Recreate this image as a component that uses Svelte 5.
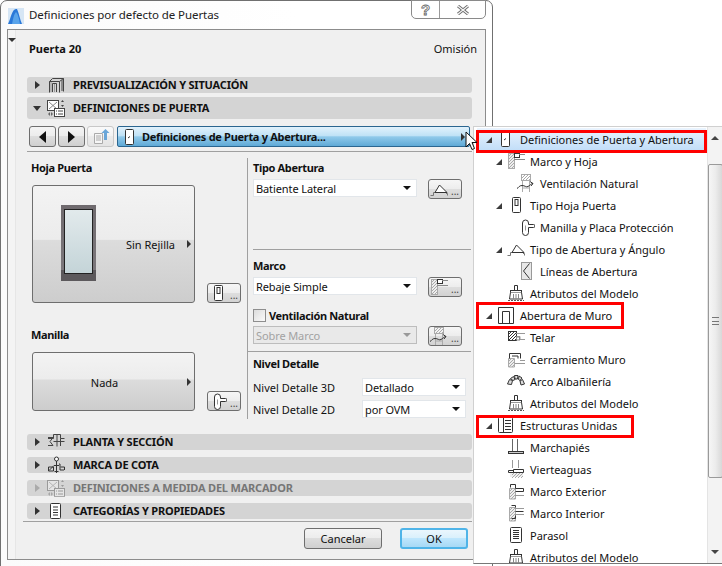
<script>
  const hatch = (x, y, w, h, c = '#aaa') => {
    let d = '';
    for (let i = 2; i < w + h; i += 3) {
      const x1 = x + Math.max(0, i - h), y1 = y + Math.min(i, h);
      const x2 = x + Math.min(i, w), y2 = y + Math.max(0, i - w);
      d += `M${x1} ${y1}L${x2} ${y2}`;
    }
    return `<path d="${d}" stroke="${c}" fill="none"/>`;
  };

  // tree + section icons, all in an 18x18 box
  const icons = {
    door: `<rect x="4.5" y="1.5" width="8" height="15" rx="1" fill="#fff" stroke="#333"/><path d="M7 10l2-1.5" stroke="#333"/>`,
    leaf: `<rect x="5.5" y="1.5" width="8" height="15" rx="1" fill="#fff" stroke="#333"/><rect x="8" y="3.5" width="3" height="6" fill="#fff" stroke="#333"/>`,
    frame: `<rect x="1.5" y="1.5" width="6" height="15" fill="#eee" stroke="#aaa"/>${hatch(2, 2, 5, 14)}<rect x="7.5" y="1.5" width="5" height="4" fill="#fff" stroke="#333"/><path d="M12 2.5h6M7 7.5h11" stroke="#888" fill="none"/>`,
    vent: `${hatch(4, 0, 10, 7)}<rect x="4.5" y="0.5" width="9" height="6" fill="none" stroke="#aaa"/><path d="M5.5 7v11M12.5 7v11M5 14h8" stroke="#aaa" fill="none"/><path d="M0 14.5c2-1 2-3 5-3s4 2 6 1 3-3 5-3M13 7.5l3 2-2 2.5" stroke="#333" fill="none"/>`,
    handle: `<path d="M5.5 5a3 3 0 0 1 6 0v1.5h5a1.5 1.5 0 0 1 0 3h-5v5a3 3 0 0 1-6 0z" fill="#fff" stroke="#333"/><path d="M8.5 7.5v5" stroke="#999"/>`,
    swing: `<path d="M0.5 15.5h3v-3h3" stroke="#777" fill="none"/><path d="M5 12.5h12L9.5 5z" fill="#fff" stroke="#333"/><path d="M16 13.5h1.5v2" stroke="#777" fill="none"/>`,
    lines: `<rect x="4.5" y="0.5" width="10" height="17" fill="#e8e8e8" stroke="#999"/><path d="M12.5 1.5L6.5 9l6 7.5" stroke="#333" fill="none"/>`,
    brush: `<path d="M7.5 6V1.5h3V6" fill="#fff" stroke="#333"/><rect x="3.5" y="6.5" width="11" height="2" fill="#fff" stroke="#333"/><path d="M3.5 8.5l-1 6.5h13l-1-6.5" fill="#fff" stroke="#333"/><path d="M6.5 10v5M9 10v5M11.5 10v5" stroke="#888"/><path d="M1 16.5h16" stroke="#555" stroke-dasharray="2 1"/>`,
    opening: `<path d="M1.5 17.5V1.5h15v16zM5.5 17.5V5.5h7v12" fill="#fff" stroke="#333"/>`,
    units: `<rect x="1.5" y="1.5" width="14" height="15" rx="1" fill="#fff" stroke="#333"/><path d="M6.5 2v14M8 4.5h6M8 7.5h6M8 10.5h6M8 13.5h6" stroke="#333"/>`,
    reveal: `<rect x="1.5" y="3.5" width="8" height="9" fill="#fff" stroke="#333"/>${hatch(2, 4, 7, 8, '#333')}<path d="M9 8.5h4v3h5M9 5.5h9" stroke="#999" fill="none"/><rect x="9.5" y="9" width="3" height="3" fill="#fff" stroke="#888"/>`,
    closure: `<path d="M1.5 17V8.5h6V17z" fill="#eee" stroke="#aaa"/>${hatch(2, 9, 5, 8)}<path d="M2.5 3.5h11v5M2.5 3.5v5M5 6h6v2.5" stroke="#333" fill="none"/><path d="M13 10.5h5M8 13.5h10" stroke="#999"/>`,
    arch: `<path d="M0.5 12l2-4.5 3 1-1 4zM3.5 6.5l3-2 1.5 3-2 1zM7.5 3.5h3.5l-.5 3.5h-2.5zM12 4l3 2-2 2.5-1.5-1zM15.5 7.5l2 4.5-3.5 1-1-4z" fill="#ddd" stroke="#333"/>`,
    sill: `<path d="M5.5 1v13M10.5 1v13" stroke="#666"/><rect x="1.5" y="13.5" width="15" height="2" fill="#ccc" stroke="#333"/>`,
    sillb: `<path d="M5.5 0v8M11.5 0v8" stroke="#999"/><path d="M1.5 10.5h5v2h-5zM6.5 9.5h10v3h-10z" fill="#fff" stroke="#333"/><path d="M3 13h13v4H3z" fill="#eee" stroke="none"/>${hatch(5, 13, 11, 5)}`,
    outer: `<path d="M2.5 17V6.5h6V17z" fill="#eee" stroke="#aaa"/>${hatch(3, 7, 5, 10)}<path d="M3.5 5.5V2.5h5v4M8.5 6.5h8v3h-8" fill="none" stroke="#333"/><path d="M8 13.5h9" stroke="#999"/>`,
    inner: `<path d="M2.5 17V3.5h6V17z" fill="#eee" stroke="#aaa"/>${hatch(3, 4, 5, 13)}<path d="M8.5 3.5v-2h-4M8.5 7.5h8M8.5 11.5v3h-4" fill="none" stroke="#333"/><path d="M8 4.5h9M8 10.5h9" stroke="#999"/>`,
    parasol: `<rect x="3.5" y="1.5" width="11" height="15" rx="1" fill="#fff" stroke="#333"/><path d="M6 4.500h6M6 6.500h6M6 8.500h6M6 10.500h6M6 12.500h6" stroke="#333"/>`,
    preview: `<path d="M2.500 16.500V5.500l3-3h11v13M2.500 5.500h10v11M5.500 16V7.500h4V16M12.500 5.500l4-3M15 4v11" fill="none" stroke="#444"/><path d="M7.500 8v8M4 6v10" stroke="#999"/>`,
    defs: `<rect x="0.5" y="1.5" width="11" height="10" fill="#fff" stroke="#444"/><path d="M2 3l8 7M10 3l-8 7" stroke="#888"/><path d="M14 3h3l-1.500-2zM14 6h3l-1.500 2z" fill="#444"/><rect x="7.500" y="9.500" width="10" height="8" fill="#fff" stroke="#444"/><path d="M11 12h5M11 15h5M9 12h1M9 15h1" stroke="#444"/><path d="M1 15l2-2v4zM6 15l-2-2v4z" fill="#666"/>`,
    plan: `<path d="M1 4.500h5l-3 4 3 4H1" fill="none" stroke="#444"/><path d="M6.500 1.500h7v4h4M6.500 1.500v4H1M10 1.500v12M13.500 5.500V13M6.500 8.500h11" fill="none" stroke="#444"/>`,
    mark: `<circle cx="9.500" cy="3" r="2" fill="#fff" stroke="#333"/><path d="M9.500 5v12M7.500 15.500h4M2 14.500l5-5h5M12 8h1v6h4" fill="none" stroke="#333"/><path d="M1.500 11h5v4h-5zM13.500 11h4v3" fill="none" stroke="#333"/>`,
    list: `<rect x="3.500" y="1.500" width="10" height="15" rx="1" fill="#fff" stroke="#333"/><path d="M6 5h5M6 8h5M6 10.500h5M6 13h5" stroke="#333"/>`
  };

  const tree = [
    { label: 'Definiciones de Puerta y Abertura', icon: 'door', depth: 0, open: true, box: { w: 231, top: 2, h: 23 }, active: true },
    { label: 'Marco y Hoja', icon: 'frame', depth: 1, open: true },
    { label: 'Ventilación Natural', icon: 'vent', depth: 2 },
    { label: 'Tipo Hoja Puerta', icon: 'leaf', depth: 1, open: true },
    { label: 'Manilla y Placa Protección', icon: 'handle', depth: 2 },
    { label: 'Tipo de Abertura y Ángulo', icon: 'swing', depth: 1, open: true },
    { label: 'Líneas de Abertura', icon: 'lines', depth: 2 },
    { label: 'Atributos del Modelo', icon: 'brush', depth: 1 },
    { label: 'Abertura de Muro', icon: 'opening', depth: 0, open: true, box: { w: 148, top: -2, h: 27 } },
    { label: 'Telar', icon: 'reveal', depth: 1 },
    { label: 'Cerramiento Muro', icon: 'closure', depth: 1 },
    { label: 'Arco Albañilería', icon: 'arch', depth: 1 },
    { label: 'Atributos del Modelo', icon: 'brush', depth: 1 },
    { label: 'Estructuras Unidas', icon: 'units', depth: 0, open: true, box: { w: 158, top: 1, h: 23 } },
    { label: 'Marchapiés', icon: 'sill', depth: 1 },
    { label: 'Vierteaguas', icon: 'sillb', depth: 1 },
    { label: 'Marco Exterior', icon: 'outer', depth: 1 },
    { label: 'Marco Interior', icon: 'inner', depth: 1 },
    { label: 'Parasol', icon: 'parasol', depth: 1 },
    { label: 'Atributos del Modelo', icon: 'brush', depth: 1 }
  ];
</script>

{#snippet section(label, icon, open = false, off = false)}
  <div class="section" class:open class:off>
    <span class="twisty"></span>
    <svg class="sec-icon" viewBox="0 0 18 18" width="18" height="18">{@html icons[icon]}</svg>
    <span class="sec-text">{label}</span>
  </div>
{/snippet}

{#snippet pick(text, off = false)}
  <div class="select" class:off>
    <span>{text}</span>
    <i class="caret"></i>
  </div>
{/snippet}

{#snippet tool(icon)}
  <div class="tool">
    <svg viewBox="0 0 18 18" width="18" height="18">{@html icons[icon]}</svg>
    <em>...</em>
  </div>
{/snippet}

<div class="stage">
  <div class="dialog">
    <header class="titlebar">
      <svg class="logo" viewBox="0 0 16 16" width="16" height="16">
        <rect width="16" height="16" fill="#d6e6f5" />
        <path d="M0 16C3 10 4 1 8 1h1c2 4 3 11 5 15z" fill="#2a78d8" />
        <path d="M4 16C5 11 6 6 8 4c2 2 3 7 4 12z" fill="#5aa4ea" />
      </svg>
      <span class="title">Definiciones por defecto de Puertas</span>
      <div class="caption">
        <span class="help">?</span>
        <span class="close">
          <svg viewBox="0 0 12 10" width="12" height="10">
            <path d="M1 1l10 8M11 1L1 9" stroke="#666" stroke-width="3" />
            <path d="M1 1l10 8M11 1L1 9" stroke="#f4f4f4" stroke-width="1.400" />
          </svg>
        </span>
      </div>
    </header>

    <div class="panel">
      <div class="gutter"><i class="gutter-caret"></i></div>
      <div class="body">
        <div class="head">
          <b>Puerta 20</b>
          <span>Omisión</span>
        </div>

        {@render section('PREVISUALIZACIÓN Y SITUACIÓN', 'preview')}
        {@render section('DEFINICIONES DE PUERTA', 'defs', true)}

        <div class="toolbar">
          <button class="nav"><i class="arrow back"></i></button>
          <button class="nav"><i class="arrow"></i></button>
          <button class="nav faint">
            <svg viewBox="0 0 18 18" width="18" height="18">
              <path d="M2.500 5.500h8v10h-8z" fill="#f6f6f6" stroke="#aaa" />
              <path d="M4 8h5M4 10h5M4 12h5" stroke="#aaa" />
              <path d="M12 12V5H9.500L13.500 1l4 4H15v7z" fill="#6aa6d8" />
            </svg>
          </button>
          <button class="panel-menu">
            <svg viewBox="0 0 18 18" width="18" height="18">{@html icons.door}</svg>
            <b>Definiciones de Puerta y Abertura...</b>
            <i class="arrow small"></i>
          </button>
        </div>

        <div class="columns">
          <div class="left">
            <h4>Hoja Puerta</h4>
            <div class="chooser-row">
              <div class="chooser tall">
                <div class="door-pic"><div class="glass"></div></div>
                <span class="chooser-text">Sin Rejilla</span>
                <i class="arrow small"></i>
              </div>
              {@render tool('leaf')}
            </div>
            <h4 class="second">Manilla</h4>
            <div class="chooser-row">
              <div class="chooser short">
                <span class="chooser-mid">Nada</span>
                <i class="arrow small"></i>
              </div>
              {@render tool('handle')}
            </div>
          </div>

          <div class="right">
            <div class="group g1">
              <h4>Tipo Abertura</h4>
              <div class="pick-row">
                {@render pick('Batiente Lateral')}
                {@render tool('swing')}
              </div>
            </div>
            <div class="group g2">
              <h4>Marco</h4>
              <div class="pick-row">
                {@render pick('Rebaje Simple')}
                {@render tool('frame')}
              </div>
              <label class="check"><i></i><b>Ventilación Natural</b></label>
              <div class="pick-row">
                {@render pick('Sobre Marco', true)}
                {@render tool('vent')}
              </div>
            </div>
            <div class="group g3">
              <h4>Nivel Detalle</h4>
              <div class="detail">
                <span>Nivel Detalle 3D</span>
                {@render pick('Detallado')}
                <span>Nivel Detalle 2D</span>
                {@render pick('por OVM')}
              </div>
            </div>
          </div>
        </div>

        <div class="stack">
          {@render section('PLANTA Y SECCIÓN', 'plan')}
          {@render section('MARCA DE COTA', 'mark')}
          {@render section('DEFINICIONES A MEDIDA DEL MARCADOR', 'defs', false, true)}
          {@render section('CATEGORÍAS Y PROPIEDADES', 'list')}
        </div>

        <footer class="actions">
          <button class="btn">Cancelar</button>
          <button class="btn ok">OK</button>
        </footer>
      </div>
    </div>
  </div>

  <aside class="popup">
    <ul class="tree">
      {#each tree as row}
        <li class="row" class:active={row.active} style="padding-left: {11 + row.depth * 10}px">
          <span class="twist">
            {#if row.open}<svg viewBox="0 0 6 6" width="6" height="6"><path d="M6 0v6H0z" fill="#3c3c3c" /></svg>{/if}
          </span>
          <svg viewBox="0 0 18 18" width="18" height="18">{@html icons[row.icon]}</svg>
          <span class="row-text">{row.label}</span>
          {#if row.box}<span class="callout" style="width: {row.box.w}px; top: {row.box.top}px; height: {row.box.h}px"></span>{/if}
        </li>
      {/each}
    </ul>
    <div class="scrollbar">
      <i class="sb-up"></i>
      <div class="thumb"><i></i></div>
      <i class="sb-down"></i>
    </div>
  </aside>

  <svg class="cursor" viewBox="0 0 13 20" width="13" height="20">
    <path d="M1 1v15l3.500-3.500 2.500 6 2.500-1-2.500-6h5z" fill="#fff" stroke="#111" />
  </svg>
</div>

<style>
  :global(body) {
    background: #fff;
  }

  .stage {
    position: relative;
    width: 722px;
    height: 566px;
    overflow: hidden;
    background: #fff;
    font-family: "Noto Sans", "Liberation Sans", sans-serif;
    font-size: 11px;
    color: #111;
  }

  h4 {
    margin: 0;
    font-size: 11px;
    line-height: 16px;
    font-weight: 700;
    letter-spacing: -0.35px;
  }

  i {
    display: block;
  }

  button {
    font: inherit;
    color: inherit;
    padding: 0;
  }

  .dialog {
    position: absolute;
    left: 0;
    top: 0;
    width: 493px;
    height: 570px;
    box-sizing: border-box;
    border: 1px solid #707070;
    border-radius: 7px 7px 0 0;
    background: linear-gradient(90deg, #fbfbfb, #fff 60%);
  }

  .titlebar {
    position: relative;
    height: 28px;
    display: flex;
    align-items: center;
    padding-left: 7px;
    gap: 5px;
  }

  .logo {
    flex: none;
    margin-top: 1px;
  }

  .title {
    font-size: 11.5px;
    letter-spacing: -0.08px;
    color: #222;
    margin-top: -1px;
  }

  .caption {
    position: absolute;
    right: 6px;
    top: -1px;
    width: 75px;
    height: 19px;
    box-sizing: border-box;
    display: flex;
    border: 1px solid #8a8a8a;
    border-radius: 0 0 5px 5px;
    background: #fff;
  }

  .help {
    width: 27px;
    border-right: 1px solid #9a9a9a;
    text-align: center;
    font: 700 15px/17px "Liberation Sans", sans-serif;
    color: #f4f4f4;
    -webkit-text-stroke: 0.8px #666;
  }

  .close {
    flex: 1;
    display: flex;
    align-items: center;
    justify-content: center;
  }

  .panel {
    margin-left: 6px;
    width: 479px;
    height: 531px;
    box-sizing: border-box;
    display: flex;
    border: 1px solid #8c8c8c;
    background: #f0f0f0;
  }

  .gutter {
    flex: none;
    width: 7px;
    background: #f4f4f4;
    border-right: 1px solid #e6e6e6;
    position: relative;
  }

  .gutter-caret {
    margin: 8px 0 0 0;
    width: 0;
    border: 4px solid transparent;
    border-top: 4px solid #333;
    border-bottom: 0;
  }

  .body {
    flex: 1;
    min-width: 0;
    display: flex;
    flex-direction: column;
    padding: 0 13px 0 11px;
  }

  .head {
    height: 47px;
    padding: 11px 0 0 2px;
    margin-right: -5px;
    box-sizing: border-box;
    display: flex;
    justify-content: space-between;
    line-height: 16px;
    flex: none;
  }

  .section {
    flex: none;
    height: 16px;
    box-sizing: border-box;
    display: flex;
    align-items: center;
    padding-left: 6px;
    border-radius: 3px;
    background: #d4d4d4;
    font-size: 11px;
    font-weight: 700;
    color: #111;
  }

  .sec-text {
    letter-spacing: -0.2px;
    margin-top: -2px;
  }

  .section + .section {
    margin-top: 4px;
  }

  .section.open {
    height: 22px;
  }

  .section.off {
    color: #767676;
  }

  .section.off .sec-icon {
    opacity: 0.4;
  }

  .twisty {
    flex: none;
    width: 0;
    height: 0;
    margin: 0 7px 0 2px;
    border-left: 5px solid #333;
    border-top: 4px solid transparent;
    border-bottom: 4px solid transparent;
  }

  .section.open .twisty {
    margin: 0 6px 0 0;
    border-top: 5px solid #333;
    border-left: 4px solid transparent;
    border-right: 4px solid transparent;
    border-bottom: 0;
  }

  .section.off .twisty {
    border-left-color: #aaa;
  }

  .sec-icon {
    flex: none;
    margin: 0 8px 0 0;
  }

  .toolbar {
    flex: none;
    height: 21px;
    margin-top: 7px;
    padding: 0 2px 4px 2px;
    display: flex;
    gap: 2px;
    border-bottom: 1px solid #a0a0a0;
  }

  .nav {
    width: 27px;
    height: 21px;
    display: flex;
    align-items: center;
    justify-content: center;
    border: 1px solid #6e6e6e;
    border-radius: 3px;
    background: linear-gradient(#f4f4f4, #ececec 48%, #dddddd 50%, #cfcfcf);
  }

  .nav.faint {
    border-color: #c8c8c8;
    background: linear-gradient(#fafafa, #f2f2f2 48%, #ebebeb 50%, #e4e4e4);
  }

  .arrow {
    width: 0;
    height: 0;
    border-left: 7px solid #111;
    border-top: 6px solid transparent;
    border-bottom: 6px solid transparent;
  }

  .arrow.back {
    border-left: 0;
    border-right: 7px solid #111;
  }

  .arrow.small {
    border-left: 4px solid #333;
    border-top-width: 4px;
    border-bottom-width: 4px;
  }

  .panel-menu {
    flex: 1;
    height: 21px;
    margin-left: 1px;
    display: flex;
    align-items: center;
    padding: 0 4px 0 3px;
    border: 1px solid #2b6690;
    border-radius: 2px;
    background: linear-gradient(#e2f2fc, #c0e2f6 45%, #90c9ea 52%, #5fa9d6);
    text-align: left;
  }

  .panel-menu b {
    flex: 1;
    margin-left: 3px;
    letter-spacing: -0.3px;
  }

  .columns {
    flex: none;
    height: 279px;
    display: flex;
  }

  .left {
    width: 220px;
    flex: none;
    padding: 8px 0 0 4px;
    box-sizing: border-box;
  }

  .left .second {
    margin-top: 24px;
  }

  .chooser-row {
    margin: 9px 0 0 1px;
    display: flex;
    align-items: flex-end;
    gap: 12px;
  }

  .chooser {
    flex: none;
    width: 163px;
    box-sizing: border-box;
    position: relative;
    display: flex;
    align-items: center;
    justify-content: flex-end;
    padding-right: 3px;
    border: 1px solid #6e6e6e;
    border-radius: 3px;
    background: linear-gradient(#f3f3f3, #ececec 46%, #dcdcdc 47%, #cdcdcd);
  }

  .tall {
    height: 118px;
  }

  .short {
    height: 59px;
  }

  .chooser-text {
    margin-right: 12px;
    margin-top: 1px;
  }

  .chooser-mid {
    position: absolute;
    left: 0;
    right: 18px;
    text-align: center;
    margin-top: 1px;
  }

  .door-pic {
    position: absolute;
    left: 28px;
    top: 19px;
    width: 35px;
    height: 76px;
    box-sizing: border-box;
    padding: 4px 3px 7px;
    background: linear-gradient(#6f6a6e, #7b777b 85%, #5c595c 85%);
  }

  .glass {
    height: 100%;
    box-sizing: border-box;
    border: 1px solid #222;
    background: linear-gradient(#e2eaec, #c4d4d8);
  }

  .tool {
    flex: none;
    position: relative;
    width: 34px;
    height: 20px;
    box-sizing: border-box;
    border: 1px solid #6e6e6e;
    border-radius: 3px;
    padding-left: 1px;
    background: linear-gradient(#f6f6f6, #ededed 48%, #dedede 50%, #d2d2d2);
    overflow: hidden;
  }

  .tool svg {
    display: block;
  }

  .tool em {
    position: absolute;
    right: 2px;
    bottom: 0;
    font-style: normal;
    line-height: 13px;
    font-size: 10px;
    color: #444;
  }

  .right {
    flex: 1;
    margin-top: 6px;
    height: 261px;
    border-left: 1px solid #a0a0a0;
  }

  .group {
    box-sizing: border-box;
    border-bottom: 1px solid #a0a0a0;
    padding: 2px 0 0 5px;
    margin-right: 1px;
  }

  .g1 {
    height: 92px;
    margin-left: 5px;
    padding-left: 0;
  }

  .g2 {
    height: 102px;
  }

  .g3 {
    border-bottom: 0;
    padding-top: 4px;
  }

  .pick-row {
    margin-top: 3px;
    display: flex;
    gap: 11px;
    height: 21px;
    margin-right: 9px;
  }

  .g2 h4 {
    margin-top: 6px;
  }

  .select {
    flex: 1;
    height: 18px;
    box-sizing: border-box;
    display: flex;
    align-items: center;
    justify-content: space-between;
    padding: 0 5px 0 2px;
    background: #fff;
    border: 1px solid #e2e6ea;
    letter-spacing: -0.1px;
  }

  .select.off {
    background: #e9e9e9;
    border-color: #bdbdbd;
    color: #a2a2a2;
  }

  .select.off .caret {
    border-top-color: #999;
  }

  .caret {
    width: 0;
    height: 0;
    border-top: 4px solid #111;
    border-left: 4px solid transparent;
    border-right: 4px solid transparent;
  }

  .check {
    margin-top: 10px;
    height: 14px;
    display: flex;
    align-items: center;
    gap: 3px;
    letter-spacing: -0.35px;
  }

  .check + .pick-row {
    margin-top: 4px;
  }

  .check i {
    width: 13px;
    height: 13px;
    box-sizing: border-box;
    border: 1px solid #8e8e8e;
    background: linear-gradient(135deg, #dcdcdc, #fafafa);
  }

  .detail {
    margin-top: 6px;
    display: grid;
    grid-template-columns: 109px 104px;
    row-gap: 4px;
    align-items: center;
  }

  .stack {
    flex: none;
    margin-top: 3px;
    padding-bottom: 2px;
    margin-left: -4px;
    padding-left: 4px;
    border-bottom: 1px solid #a0a0a0;
    display: flex;
    flex-direction: column;
    gap: 7px;
  }

  .stack .section + .section {
    margin-top: 0;
  }

  .actions {
    flex: none;
    margin-top: 6px;
    display: flex;
    justify-content: flex-end;
    gap: 18px;
    margin-right: 4px;
  }

  .btn {
    width: 78px;
    height: 21px;
    border: 1px solid #6e6e6e;
    border-radius: 3px;
    background: linear-gradient(#f4f4f4, #ececec 48%, #dddddd 50%, #cfcfcf);
  }

  .btn.ok {
    width: 68px;
    border: 2px solid #4fb4e8;
    background: linear-gradient(#eaf6fd, #d9f0fc 48%, #bee6fd 50%, #a7d9f5);
  }

  .popup {
    position: absolute;
    left: 473px;
    top: 126px;
    width: 249px;
    height: 438px;
    box-sizing: border-box;
    display: flex;
    background: #fff;
    border: 1px solid #d0d0d0;
    border-right: 0;
    border-bottom-color: #777;
    overflow: hidden;
  }

  .tree {
    flex: 1;
    min-width: 0;
    margin: 0;
    padding: 1px 0 0;
    list-style: none;
  }

  .row {
    position: relative;
    height: 22px;
    box-sizing: border-box;
    display: flex;
    align-items: center;
    white-space: nowrap;
  }

  .row.active {
    margin: 0 1px 0 3px;
    background: linear-gradient(#eaf4fe, #c2def8);
  }

  .row.active > .twist {
    margin-left: -3px;
  }

  .twist {
    flex: none;
    width: 12px;
    display: flex;
    align-items: center;
    padding-left: 1px;
    box-sizing: border-box;
    margin-top: 2px;
  }

  .row > svg {
    flex: none;
    margin-right: 5px;
  }

  .row-text {
    font-size: 11px;
    color: #111;
  }

  .callout {
    position: absolute;
    left: 2px;
    box-sizing: border-box;
    border: 3px solid #f00;
  }

  .row.active .callout {
    left: -1px;
  }

  .scrollbar {
    flex: none;
    width: 15px;
    position: relative;
    background: #f3f3f3;
    border-left: 1px solid #e4e4e4;
    box-sizing: border-box;
    display: flex;
    flex-direction: column;
    align-items: center;
    padding-top: 9px;
  }

  .sb-up {
    width: 0;
    height: 0;
    border-bottom: 4px solid #444;
    border-left: 4px solid transparent;
    border-right: 4px solid transparent;
  }

  .sb-down {
    width: 0;
    height: 0;
    margin-top: 72px;
    border-top: 4px solid #444;
    border-left: 4px solid transparent;
    border-right: 4px solid transparent;
  }

  .thumb {
    width: 15px;
    height: 314px;
    margin-top: 24px;
    box-sizing: border-box;
    border: 1px solid #9a9a9a;
    border-radius: 2px;
    background: linear-gradient(90deg, #f6f6f6, #ececec 50%, #d8d8d8);
    display: flex;
    align-items: center;
    justify-content: center;
  }

  .thumb i {
    width: 7px;
    height: 6px;
    border-top: 1px solid #777;
    border-bottom: 1px solid #777;
    background: linear-gradient(#777, #777) center / 100% 1px no-repeat;
  }

  .cursor {
    position: absolute;
    left: 465px;
    top: 131px;
  }
</style>
